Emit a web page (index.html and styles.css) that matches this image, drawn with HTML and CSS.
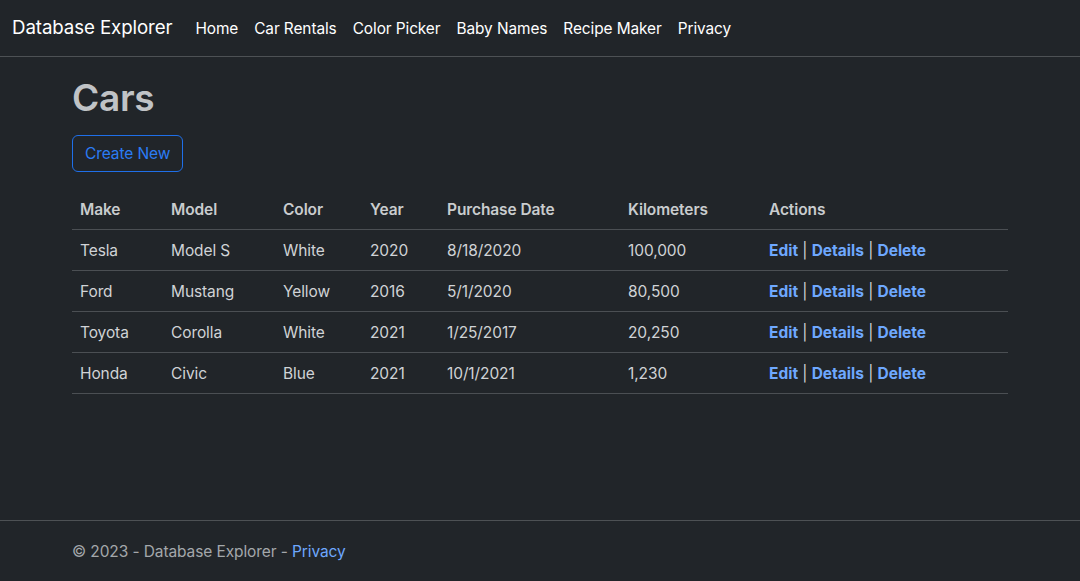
FILE: index.html
```html
<!DOCTYPE html>
<html lang="en">
<head>
<meta charset="utf-8">
<title>Cars - Database Explorer</title>
<link rel="stylesheet" href="styles.css">
</head>
<body>
<header class="navbar">
  <a class="brand" href="#">Database Explorer</a>
  <nav class="nav">
    <a href="#">Home</a>
    <a href="#">Car Rentals</a>
    <a href="#">Color Picker</a>
    <a href="#">Baby Names</a>
    <a href="#">Recipe Maker</a>
    <a href="#">Privacy</a>
  </nav>
</header>
<main class="container">
  <h1 class="title">Cars</h1>
  <p class="actions-top"><a class="btn" href="#">Create New</a></p>
  <table class="table">
    <thead>
      <tr><th>Make</th><th>Model</th><th>Color</th><th>Year</th><th>Purchase Date</th><th>Kilometers</th><th>Actions</th></tr>
    </thead>
    <tbody>
      <tr><td>Tesla</td><td>Model S</td><td>White</td><td>2020</td><td>8/18/2020</td><td>100,000</td><td class="acts"><a href="#">Edit</a> | <a href="#">Details</a> | <a href="#">Delete</a></td></tr>
      <tr><td>Ford</td><td>Mustang</td><td>Yellow</td><td>2016</td><td>5/1/2020</td><td>80,500</td><td class="acts"><a href="#">Edit</a> | <a href="#">Details</a> | <a href="#">Delete</a></td></tr>
      <tr><td>Toyota</td><td>Corolla</td><td>White</td><td>2021</td><td>1/25/2017</td><td>20,250</td><td class="acts"><a href="#">Edit</a> | <a href="#">Details</a> | <a href="#">Delete</a></td></tr>
      <tr><td>Honda</td><td>Civic</td><td>Blue</td><td>2021</td><td>10/1/2021</td><td>1,230</td><td class="acts"><a href="#">Edit</a> | <a href="#">Details</a> | <a href="#">Delete</a></td></tr>
    </tbody>
  </table>
</main>
<footer class="footer">
  <div class="container footer-inner">&copy; 2023 - Database Explorer - <a href="#">Privacy</a></div>
</footer>
</body>
</html>
```
FILE: styles.css
```css
* { box-sizing: border-box; }
html, body { height: 100%; }
body {
  margin: 0;
  background: #212529;
  color: #d0d3d6;
  font-family: Inter, "Liberation Sans", sans-serif;
  font-size: 16px;
  line-height: 1.5;
  display: flex;
  flex-direction: column;
}
a { text-decoration: none; }
.navbar {
  height: 57px;
  display: flex;
  align-items: center;
  padding: 0 12px;
  border-bottom: 1px solid #4d5154;
}
.brand {
  color: #fff;
  font-size: 18.7px;
  margin-right: 15px;
  letter-spacing: -0.1px;
  padding-top: 1px;
}
.nav { display: flex; padding-top: 1px; }
.nav a {
  color: #fff;
  font-size: 15.4px;
  padding: 8px 8px;
  letter-spacing: -0.08px;
}
.container {
  width: 960px;
  margin: 0 auto;
  padding: 0 12px;
}
main.container { flex: 1; }
.title {
  margin: 19px 0 15px;
  font-size: 37px;
  font-weight: 600;
  line-height: 1.2;
  color: #c0c3c6;
  letter-spacing: -0.3px;
}
.actions-top { margin: 0 0 18px; }
.btn {
  display: inline-block;
  color: #2b7cf4;
  border: 1px solid #1f6fe8;
  border-radius: 6px;
  padding: 6px 12px;
  font-size: 15.5px;
  line-height: 23px;
  letter-spacing: -0.1px;
}
.table {
  width: 100%;
  border-collapse: collapse;
}
.table th, .table td {
  text-align: left;
  padding: 9px 8px 7px;
  border-bottom: 1px solid #4b4f53;
  font-size: 15.5px;
  line-height: 24px;
  letter-spacing: -0.1px;
}
.table th { font-weight: 600; color: #c9ccce; padding-top: 8px; padding-bottom: 7px; }
.table th:nth-child(1) { width: 91px; }
.table th:nth-child(2) { width: 112px; }
.table th:nth-child(3) { width: 87px; }
.table th:nth-child(4) { width: 77px; }
.table th:nth-child(5) { width: 181px; }
.table th:nth-child(6) { width: 141px; }
.acts { color: #d0d3d6; }
.acts a { color: #6ea8fe; font-weight: 700; letter-spacing: 0; }
.footer {
  border-top: 1px solid #4d5154;
  height: 61px;
}
.footer-inner {
  line-height: 61px;
  color: #a4a8ab;
  font-size: 15.5px;
  letter-spacing: -0.1px;
}
.footer-inner a { color: #6ea8fe; }
```
